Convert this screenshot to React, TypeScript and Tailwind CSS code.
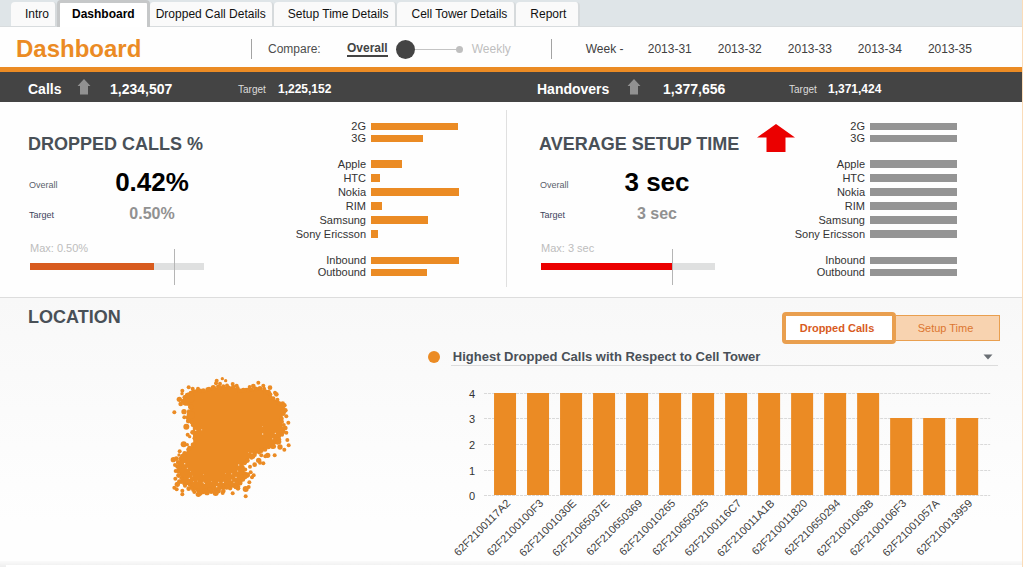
import React, { useState } from "react";

const tabs = [
  { label: "Intro", pad: "pl-3.5 pr-1.5" },
  { label: "Dashboard", pad: "px-3" },
  { label: "Dropped Call Details", pad: "px-1.5" },
  { label: "Setup Time Details", pad: "pl-3.5 pr-[7px]" },
  { label: "Cell Tower Details", pad: "pl-3.5 pr-[7px]" },
  { label: "Report", pad: "pl-3.5 pr-3" },
];

const weeks = ["2013-31", "2013-32", "2013-33", "2013-34", "2013-35"];

// bar lengths are percentages of the longest bar
const droppedGroups = [
  [{ name: "2G", value: 99 }, { name: "3G", value: 59 }],
  [
    { name: "Apple", value: 35 },
    { name: "HTC", value: 10 },
    { name: "Nokia", value: 100 },
    { name: "RIM", value: 12 },
    { name: "Samsung", value: 65 },
    { name: "Sony Ericsson", value: 8 },
  ],
  [{ name: "Inbound", value: 100 }, { name: "Outbound", value: 64 }],
];

const setupGroups = droppedGroups.map((group) =>
  group.map((row) => ({ name: row.name, value: 99 }))
);

const towers = [
  { id: "62F2100117A2", drops: 4 },
  { id: "62F2100100F3", drops: 4 },
  { id: "62F21001030E", drops: 4 },
  { id: "62F21065037E", drops: 4 },
  { id: "62F210650369", drops: 4 },
  { id: "62F210010265", drops: 4 },
  { id: "62F210650325", drops: 4 },
  { id: "62F2100116C7", drops: 4 },
  { id: "62F210011A1B", drops: 4 },
  { id: "62F210011820", drops: 4 },
  { id: "62F210650294", drops: 4 },
  { id: "62F21001063B", drops: 4 },
  { id: "62F2100106F3", drops: 3 },
  { id: "62F21001057A", drops: 3 },
  { id: "62F210013959", drops: 3 },
];

// y position of the grid line for each value 0..4
const gridY = [122, 97, 71, 45, 20];

function TowerChart() {
  return (
    <svg viewBox="0 0 570 186" className="block w-full" role="img" aria-label="Dropped calls by cell tower">
      {gridY.map((y, value) => (
        <g key={value}>
          <line x1="56" x2="562" y1={y - 0.5} y2={y - 0.5} stroke="#d9d9d9" strokeDasharray="3 1" />
          <text x="47" y={y + 4} textAnchor="end" fontSize="11" fill="#333333">{value}</text>
        </g>
      ))}
      {towers.map((tower, i) => (
        <g key={tower.id}>
          <rect x={66 + i * 33} y={gridY[tower.drops] - 1} width="22" height={gridY[0] - gridY[tower.drops]} fill="#eb8b24" />
          <text
            textAnchor="end"
            fontSize="11"
            fill="#404040"
            transform={`translate(${83 + i * 33} 130) rotate(-45)`}
          >
            {tower.id}
          </text>
        </g>
      ))}
    </svg>
  );
}

const outline = [
  [100, 78], [130, 77], [160, 68], [190, 64], [220, 66], [250, 76], [275, 74], [300, 70], [325, 82], [340, 100],
  [368, 116], [370, 140], [366, 170], [370, 200], [356, 230], [337, 246], [304, 257], [278, 274], [256, 290],
  [248, 310], [262, 330], [242, 350], [234, 370], [200, 366], [170, 380], [148, 374], [120, 384], [95, 368],
  [66, 350], [56, 318], [54, 292], [74, 265], [100, 240], [98, 180], [84, 158], [92, 125], [68, 108], [82, 90],
];

const outliers = [
  [187, 41, 5], [197, 47, 5], [170, 47, 6], [168, 55, 6], [180, 56, 6], [218, 57, 6], [230, 62, 6], [295, 53, 6],
  [280, 63, 7], [310, 62, 6], [330, 68, 7], [269, 66, 6], [86, 67, 6], [98, 71, 6], [114, 71, 6], [67, 77, 6],
  [66, 86, 5], [349, 88, 7], [345, 83, 6], [58, 103, 8], [62, 117, 7], [43, 142, 6], [72, 140, 8], [73, 157, 6],
  [79, 185, 9], [83, 209, 6], [89, 215, 5], [71, 238, 9], [82, 239, 5], [373, 121, 7], [376, 136, 7], [379, 154, 6],
  [385, 173, 6], [376, 189, 7], [379, 203, 6], [382, 225, 6], [386, 241, 6], [373, 254, 6], [360, 246, 8], [344, 271, 6],
  [323, 271, 8], [316, 274, 6], [304, 271, 6], [296, 286, 8], [310, 295, 6], [300, 293, 6], [284, 299, 7], [270, 305, 6],
  [272, 322, 6], [281, 331, 6], [276, 337, 6], [257, 334, 7], [268, 352, 6], [266, 366, 6], [257, 372, 9], [257, 394, 6],
  [218, 385, 6], [190, 378, 7], [188, 384, 6], [167, 384, 9], [141, 383, 8], [115, 388, 8], [103, 381, 6], [86, 371, 7],
  [67, 377, 6], [67, 388, 6], [43, 368, 6], [50, 373, 6], [46, 341, 6], [58, 350, 7], [52, 358, 8], [47, 318, 6],
  [45, 300, 6], [40, 284, 8], [49, 281, 7], [59, 259, 6], [70, 275, 9], [55, 293, 7], [57, 270, 5], [75, 362, 6],
  [88, 98, 16], [92, 150, 12], [78, 110, 12],
];

const gaps = [
  [131, 328], [130, 352], [133, 355], [155, 349], [176, 352], [190, 352], [92, 320], [82, 310], [236, 300], [197, 325],
  [215, 326], [228, 337], [265, 263], [276, 265], [308, 207], [307, 185], [125, 194], [107, 196], [112, 348], [215, 345],
  [88, 340], [100, 350], [233, 318], [346, 205], [250, 300], [338, 221], [170, 365], [98, 333], [222, 352], [74, 296],
];

function LocationMap() {
  return (
    <svg viewBox="0 0 420 420" className="h-[140px] w-[140px]" role="img" aria-label="Cell tower locations" fill="#eb8b24">
      <polygon points={outline.map((p) => p.join(",")).join(" ")} />
      {outline.map(([x, y], i) => {
        const [nx, ny] = outline[(i + 1) % outline.length];
        return (
          <g key={i}>
            <circle cx={x} cy={y} r={6 + (i % 3)} />
            <circle cx={(x * 2 + nx) / 3 + ((i * 7) % 5)} cy={(y * 2 + ny) / 3 - ((i * 5) % 4)} r="6" />
            <circle cx={(x + nx * 2) / 3 - ((i * 3) % 5)} cy={(y + ny * 2) / 3 + ((i * 11) % 5)} r="7" />
          </g>
        );
      })}
      {outliers.map(([x, y, r], i) => (
        <circle key={i} cx={x} cy={y} r={r} />
      ))}
      {gaps.map(([x, y], i) => (
        <circle key={i} cx={x} cy={y} r={1 + (i % 3) / 2} fill="#fbe2c6" />
      ))}
    </svg>
  );
}

function UpArrow() {
  return (
    <svg viewBox="0 0 14 16" className="mb-1 h-4 w-3.5" aria-hidden="true">
      <path d="M7 0 L13.5 7 H11 V15.5 H3 V7 H0.5 Z" fill="#919191" />
    </svg>
  );
}

function Total({ label, value, target, cols }: { label: string; value: string; target: string; cols: string }) {
  return (
    <div className={`grid items-center pt-1 text-white ${cols}`}>
      <span className="text-sm font-bold">{label}</span>
      <UpArrow />
      <span className="text-sm font-bold">{value}</span>
      <span className="text-[10px] text-[#dcdcdc]">Target</span>
      <span className="text-xs font-bold">{target}</span>
    </div>
  );
}

function BarGroups({ groups, color }: { groups: { name: string; value: number }[][]; color: string }) {
  return (
    <div className="flex shrink-0 flex-col gap-[13px] pt-[18px]">
      {groups.map((group, g) => (
        <ul key={g}>
          {group.map((row) => (
            <li key={row.name} className={`flex items-center gap-[5px] ${group.length > 2 ? "h-3.5" : "h-3"}`}>
              <span className="w-20 text-right text-[11px] leading-3 text-[#333333]">{row.name}</span>
              <span className="w-[88px]">
                <span
                  className={`block ${color} ${group.length > 2 ? "h-2" : "h-[7px]"}`}
                  style={{ width: `${row.value}%` }}
                />
              </span>
            </li>
          ))}
        </ul>
      ))}
    </div>
  );
}

type KpiProps = {
  title: string;
  overall: string;
  target: string;
  valueWidth: string;
  max: string;
  fill: number;
  marker: number;
  fillColor: string;
  alert?: boolean;
};

function Kpi({ title, overall, target, valueWidth, max, fill, marker, fillColor, alert }: KpiProps) {
  return (
    <div className="min-w-0 pt-[22px]">
      <div className="flex h-10 items-center gap-[18px]">
        <h2 className="text-lg leading-5 font-bold whitespace-nowrap text-[#495057]">{title}</h2>
        {alert && (
          <svg viewBox="0 0 38 28" className="mb-3 h-7 w-[38px] shrink-0" aria-label="Above target">
            <path d="M19 0 L38 13.5 H28.5 V28 H9.5 V13.5 H0 Z" fill="#eb0000" />
          </svg>
        )}
      </div>
      <dl>
        <div className="flex h-9 items-center">
          <dt className="w-10 pt-2 pl-px text-[9px] text-[#5a5f6b]">Overall</dt>
          <dd className={`text-center text-[26px] font-bold text-black ${valueWidth}`}>{overall}</dd>
        </div>
        <div className="flex h-7 items-center">
          <dt className="w-10 pt-1 pl-px text-[9px] text-[#40445c]">Target</dt>
          <dd className={`text-center text-base font-bold text-[#919191] ${valueWidth}`}>{target}</dd>
        </div>
      </dl>
      <div className="mt-3 ml-0.5 w-[174px]">
        <p className="h-[23px] text-[11px] leading-4 text-[#bdbdbd]">{max}</p>
        <div className="relative h-[7px] bg-[#dfe0e0]">
          <div className={`h-full ${fillColor}`} style={{ width: `${fill}%` }} />
          <div className="absolute -top-3.5 h-9 w-px bg-[#b5b5b5]" style={{ left: `${marker}%` }} />
        </div>
      </div>
    </div>
  );
}

export default function App() {
  const [activeTab, setActiveTab] = useState("Dashboard");
  const [period, setPeriod] = useState(0);
  const [metric, setMetric] = useState("dropped");

  return (
    <div className="flex min-h-screen flex-col border-r border-[#fbdcb8] bg-[#fefefe] font-['Liberation_Sans',Arial,sans-serif]">
      <nav className="flex h-[27px] items-end border-b border-[#d8dcde] bg-[#dfe5e8] pl-[11px]">
        {tabs.map((tab) => (
          <a
            key={tab.label}
            href="#"
            onClick={() => setActiveTab(tab.label)}
            className={
              activeTab === tab.label
                ? `-mb-px flex h-[27px] items-center rounded-t border-x-3 border-t-3 border-[#c6c8c9] bg-white pb-0.5 text-xs font-bold whitespace-nowrap text-black ${tab.pad}`
                : `flex h-6 items-center rounded-t border-r-2 border-[#d6dadc] bg-[#fafafa] text-xs whitespace-nowrap text-[#111111] ${tab.pad}`
            }
          >
            {tab.label}
          </a>
        ))}
      </nav>

      <header className="flex h-10 items-center pt-1 pl-4">
        <h1 className="w-[235px] text-2xl leading-8 font-bold text-[#eb8b24]">Dashboard</h1>
        <div className="flex h-5 items-center border-l border-[#a3a3a3] pl-4 text-xs">
          <label htmlFor="period" className="w-[79px] text-[#4d4d4d]">Compare:</label>
          <span className="border-b-2 border-[#444444] leading-3.5 font-bold text-[#444444]">Overall</span>
          <input
            id="period"
            type="range"
            min="0"
            max="1"
            value={period}
            onChange={(e) => setPeriod(Number(e.target.value))}
            className="ml-2 h-5 w-[60px] appearance-none bg-[linear-gradient(#c4c4c4,#c4c4c4)] bg-size-[100%_1px] bg-center bg-no-repeat [&::-webkit-slider-thumb]:size-[19px] [&::-webkit-slider-thumb]:appearance-none [&::-webkit-slider-thumb]:rounded-full [&::-webkit-slider-thumb]:bg-[#444444]"
          />
          <span className="size-[7px] rounded-full bg-[#bfbfbf]" />
          <span className="w-[88px] pl-[9px] text-[#bfbfbf]">Weekly</span>
        </div>
        <div className="flex h-5 items-center border-l border-[#a3a3a3] pl-[34px] text-xs text-[#404040]">
          <span className="w-[62px]">Week -</span>
          <div className="flex gap-[26px]">
            {weeks.map((week) => (
              <button key={week} type="button" className="whitespace-nowrap">
                {week}
              </button>
            ))}
          </div>
        </div>
      </header>

      <section className="grid h-[35px] grid-cols-2 border-t-5 border-[#eb8b24] bg-[#444444]">
        <Total label="Calls" value="1,234,507" target="1,225,152" cols="grid-cols-[49px_33px_128px_40px_auto] pl-7" />
        <Total label="Handovers" value="1,377,656" target="1,371,424" cols="grid-cols-[90px_36px_126px_39px_auto] pl-[26px]" />
      </section>

      <section className="grid h-[195px] grid-cols-2">
        <div className="relative flex justify-between pr-[52px] pl-7">
          <Kpi
            title="DROPPED CALLS %"
            overall="0.42%"
            target="0.50%"
            valueWidth="w-[168px]"
            max="Max: 0.50%"
            fill={71}
            marker={83}
            fillColor="bg-[#d85b1e]"
          />
          <BarGroups groups={droppedGroups} color="bg-[#eb8b24]" />
          <div className="absolute top-2 right-1 bottom-2.5 w-px bg-[#e0e0e0]" />
        </div>
        <div className="flex justify-between pr-16 pl-7">
          <Kpi
            title="AVERAGE SETUP TIME"
            overall="3 sec"
            target="3 sec"
            valueWidth="w-[156px]"
            max="Max: 3 sec"
            fill={75}
            marker={75}
            fillColor="bg-[#eb0000]"
            alert
          />
          <BarGroups groups={setupGroups} color="bg-[#949494]" />
        </div>
      </section>

      <section className="grid flex-1 grid-cols-[18fr_25fr] border-t border-[#dddddd] bg-linear-to-b from-[#f8f8f8] to-[#fefefe] to-85%">
        <div className="pt-[9px] pl-7">
          <h2 className="text-lg leading-5 font-bold text-[#495057]">LOCATION</h2>
          <div className="mt-[38px] ml-[132px]">
            <LocationMap />
          </div>
        </div>
        <div className="pt-3.5 pr-6">
          <div className="-mr-0.5 flex items-center justify-end">
            <button
              type="button"
              onClick={() => setMetric("dropped")}
              aria-pressed={metric === "dropped"}
              className="h-8 w-[114px] rounded border-4 border-[#e99f4f] bg-white pr-1 text-[11px] font-bold text-[#d85b1e]"
            >
              Dropped Calls
            </button>
            <button
              type="button"
              onClick={() => setMetric("setup")}
              aria-pressed={metric === "setup"}
              className="h-[26px] w-[104px] border border-l-0 border-[#e99f4f] bg-[#f8d3b0] pr-1 text-[11px] text-[#dc7630]"
            >
              Setup Time
            </button>
          </div>
          <div className="mt-1 flex h-[18px] items-center gap-[11px]">
            <span className="size-3 rounded-full bg-[#eb8b24]" />
            <div className="relative flex-1">
              <select
                aria-label="Chart"
                className="block h-[18px] w-full appearance-none border-b border-[#dcdcdc] pl-0.5 text-[13px] leading-4 font-bold text-[#495057]"
              >
                <option>Highest Dropped Calls with Respect to Cell Tower</option>
              </select>
              <svg viewBox="0 0 10 6" className="pointer-events-none absolute top-1.5 right-[5px] h-1.5 w-2.5" aria-hidden="true">
                <path d="M0.5 0.5 H9.5 L5 5.5 Z" fill="#6a6f74" />
              </svg>
            </div>
          </div>
          <div className="mt-2">
            <TowerChart />
          </div>
        </div>
      </section>

      <footer className="h-1.5 bg-linear-to-b from-[#fafafa] to-[#eeeeee] pt-1 pl-1.5">
        <div className="h-full bg-white" />
      </footer>
    </div>
  );
}
